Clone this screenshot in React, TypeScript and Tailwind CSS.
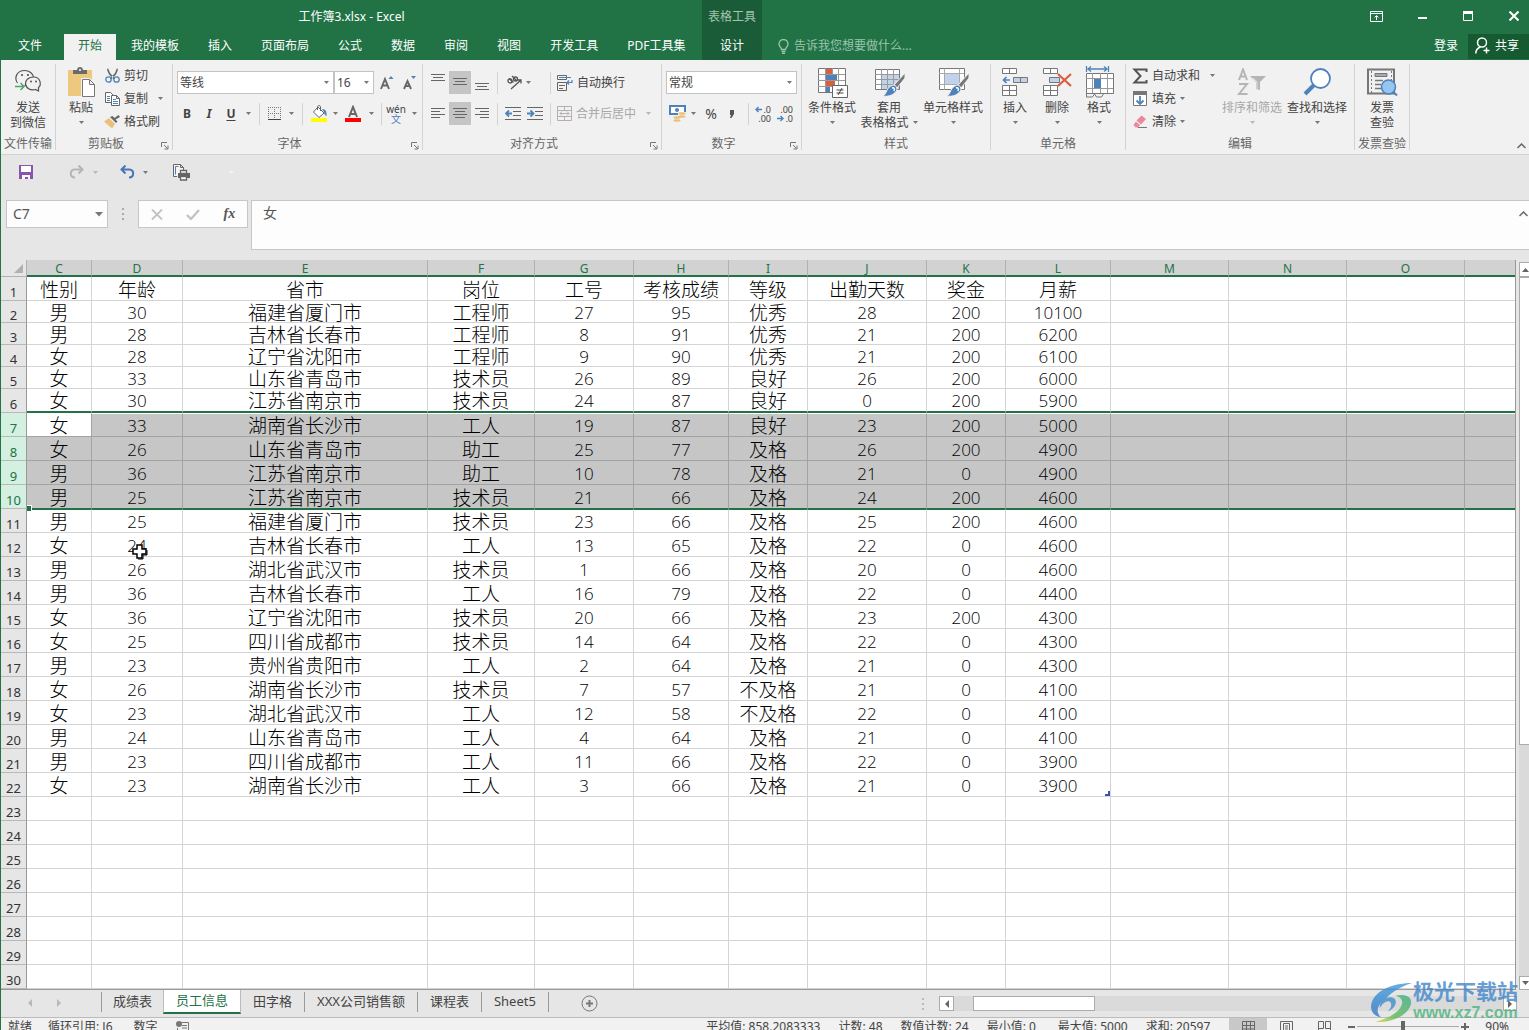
import type { ReactNode } from "react";

type RibbonItemProps = {
  icon: ReactNode;
  lines: string[];
  width: string;
  arrow?: "below" | "inline";
  disabled?: boolean;
};

const menuTabs = [
  "我的模板",
  "插入",
  "页面布局",
  "公式",
  "数据",
  "审阅",
  "视图",
  "开发工具",
  "PDF工具集",
];

const columns = [
  { name: "C", width: "w-[65px]" },
  { name: "D", width: "w-[91px]" },
  { name: "E", width: "w-[245px]" },
  { name: "F", width: "w-[107px]" },
  { name: "G", width: "w-[99px]" },
  { name: "H", width: "w-[95px]" },
  { name: "I", width: "w-[79px]" },
  { name: "J", width: "w-[119px]" },
  { name: "K", width: "w-[79px]" },
  { name: "L", width: "w-[105px]" },
  { name: "M", width: "w-[118px]" },
  { name: "N", width: "w-[118px]" },
  { name: "O", width: "w-[118px]" },
  { name: "", width: "" },
];

const data = [
  ["性别", "年龄", "省市", "岗位", "工号", "考核成绩", "等级", "出勤天数", "奖金", "月薪"],
  ["男", "30", "福建省厦门市", "工程师", "27", "95", "优秀", "28", "200", "10100"],
  ["男", "28", "吉林省长春市", "工程师", "8", "91", "优秀", "21", "200", "6200"],
  ["女", "28", "辽宁省沈阳市", "工程师", "9", "90", "优秀", "21", "200", "6100"],
  ["女", "33", "山东省青岛市", "技术员", "26", "89", "良好", "26", "200", "6000"],
  ["女", "30", "江苏省南京市", "技术员", "24", "87", "良好", "0", "200", "5900"],
  ["女", "33", "湖南省长沙市", "工人", "19", "87", "良好", "23", "200", "5000"],
  ["女", "26", "山东省青岛市", "助工", "25", "77", "及格", "26", "200", "4900"],
  ["男", "36", "江苏省南京市", "助工", "10", "78", "及格", "21", "0", "4900"],
  ["男", "25", "江苏省南京市", "技术员", "21", "66", "及格", "24", "200", "4600"],
  ["男", "25", "福建省厦门市", "技术员", "23", "66", "及格", "25", "200", "4600"],
  ["女", "24", "吉林省长春市", "工人", "13", "65", "及格", "22", "0", "4600"],
  ["男", "26", "湖北省武汉市", "技术员", "1", "66", "及格", "20", "0", "4600"],
  ["男", "36", "吉林省长春市", "工人", "16", "79", "及格", "22", "0", "4400"],
  ["女", "36", "辽宁省沈阳市", "技术员", "20", "66", "及格", "23", "200", "4300"],
  ["女", "25", "四川省成都市", "技术员", "14", "64", "及格", "22", "0", "4300"],
  ["男", "23", "贵州省贵阳市", "工人", "2", "64", "及格", "21", "0", "4300"],
  ["女", "26", "湖南省长沙市", "技术员", "7", "57", "不及格", "21", "0", "4100"],
  ["女", "23", "湖北省武汉市", "工人", "12", "58", "不及格", "22", "0", "4100"],
  ["男", "24", "山东省青岛市", "工人", "4", "64", "及格", "21", "0", "4100"],
  ["男", "23", "四川省成都市", "工人", "11", "66", "及格", "22", "0", "3900"],
  ["女", "23", "湖南省长沙市", "工人", "3", "66", "及格", "21", "0", "3900"],
];

const ROW_COUNT = 30;
const SELECTED_FROM = 7;
const SELECTED_TO = 10;

/* ---------- small shared pieces ---------- */

function Caret({ className = "", color = "text-[#777]" }: { className?: string; color?: string }) {
  return (
    <svg width="5" height="3" viewBox="0 0 5 3" className={`shrink-0 ${color} ${className}`}>
      <path d="M0 0h5L2.5 3z" fill="currentColor" />
    </svg>
  );
}

function CaretButton({ label, width }: { label: string; width: string }) {
  return (
    <button aria-label={label} className={`flex h-full items-center justify-center ${width}`}>
      <Caret />
    </button>
  );
}

function Divider({ className = "" }: { className?: string }) {
  return <span className={`h-[22px] w-px shrink-0 bg-[#d2d2d2] ${className}`} />;
}

function Group({
  label,
  width,
  launcher,
  children,
}: {
  label: string;
  width: string;
  launcher?: boolean;
  children: ReactNode;
}) {
  return (
    <section className={`flex shrink-0 flex-col border-r border-[#d2d2d2] ${width}`}>
      <div className="flex h-[71px]">{children}</div>
      <div className="flex h-4 items-start text-[#666]">
        <span className="flex-1 whitespace-nowrap text-center leading-5">{label}</span>
        {launcher && (
          <button aria-label={`${label}设置`} className="flex h-4 w-4 items-end justify-center">
            <svg width="9" height="9" viewBox="0 0 9 9" fill="none" stroke="#777">
              <path d="M1.5 6V1.5H7M4 4l3.5 3.5M8 4.5V8H4.5" />
            </svg>
          </button>
        )}
      </div>
    </section>
  );
}

function BigButton({ icon, lines, width, arrow, disabled }: RibbonItemProps) {
  return (
    <button
      disabled={disabled}
      className={`flex h-[68px] shrink-0 flex-col items-center pt-[2px] leading-[15px] ${width} ${
        disabled ? "text-[#a8a8a8]" : "text-[#444]"
      }`}
    >
      <span className="mb-[2px] flex h-8 items-center">{icon}</span>
      {lines.map((line, index) => (
        <span key={line} className="flex items-center gap-1 whitespace-nowrap">
          {line}
          {arrow === "inline" && index === lines.length - 1 && <Caret />}
        </span>
      ))}
      {arrow === "below" && (
        <span className="flex h-[15px] items-center">
          <Caret color={disabled ? "text-[#b8b8b8]" : "text-[#777]"} />
        </span>
      )}
    </button>
  );
}

function SmallButton({
  icon,
  label,
  gap = "gap-1",
  arrow,
}: {
  icon: ReactNode;
  label: string;
  gap?: string;
  arrow?: boolean;
}) {
  return (
    <button className="flex h-[23px] items-center gap-1 whitespace-nowrap">
      <span className="flex w-4 justify-center">{icon}</span>
      <span className={`flex items-center ${gap}`}>
        {label}
        {arrow && <Caret />}
      </span>
    </button>
  );
}

function Dropdown({ label, value, width }: { label: string; value: string; width: string }) {
  return (
    <span className={`relative flex h-[23px] border border-[#c3c3c3] bg-white ${width}`}>
      <select aria-label={label} className="w-full appearance-none bg-transparent pl-[2px] text-[#444] outline-none">
        <option>{value}</option>
      </select>
      <span className="pointer-events-none absolute right-1 top-[9px]">
        <Caret />
      </span>
    </span>
  );
}

function Lines({ d, label, active }: { d: string; label: string; active?: boolean }) {
  return (
    <button
      aria-label={label}
      className={`flex h-[23px] w-[22px] items-center justify-center ${active ? "bg-[#c5c5c5]" : ""}`}
    >
      <svg width="14" height="17" viewBox="0 0 14 17" stroke="#666" fill="none">
        <path d={d} />
      </svg>
    </button>
  );
}

/* ---------- ribbon icons ---------- */

function WechatIcon() {
  return (
    <svg width="28" height="26" viewBox="0 0 28 26" fill="none" stroke="#555" strokeWidth="1.2">
      <path d="M3.500 14C0 9 2.500 1.500 10.500 1.500c5 0 8.500 3 9 6.500M12.500 16.500l-2-.2" />
      <path d="M24.500 18.500c3-2.500 2.500-10.500-5-10.500-5 0-8 3-8 6.500 0 4.500 5 7.500 10 6l3 1.500z" />
      <path d="M1 17.500h9M6.500 14l3.500 3.500L6.500 21" stroke="#4fa56c" strokeWidth="1.500" />
      <g fill="#555" stroke="none">
        <circle cx="8" cy="6" r="1.100" />
        <circle cx="14" cy="6" r="1.100" />
        <circle cx="17" cy="12.500" r="1" />
        <circle cx="22" cy="12.500" r="1" />
      </g>
    </svg>
  );
}

function PasteIcon() {
  return (
    <svg width="29" height="30" viewBox="0 0 29 30">
      <path d="M1 3h24v26H1z" fill="#edc87e" />
      <path d="M6 7V3h4c0-4 6-4 6 0h4v4z" fill="#6b6b6b" />
      <circle cx="13" cy="3" r="1" fill="#fff" />
      <path d="M14 11h9l5.500 5.500V30H14z" fill="#f1f1f1" />
      <path d="M15.500 12.500h7l5 5v12h-12zM22.500 12.500v5h5" fill="#fff" stroke="#777" />
    </svg>
  );
}

function CutIcon() {
  return (
    <svg width="15" height="15" viewBox="0 0 15 15" fill="none">
      <path d="M3 0l2 5 5 5.500-1 1-5-5L2 2zM12 0l-2 5-5 5.500 1 1 5-5L13 2z" fill="#666" />
      <circle cx="3.500" cy="11.500" r="2.700" stroke="#4e82bb" strokeWidth="1.300" />
      <circle cx="11.500" cy="11.500" r="2.700" stroke="#4e82bb" strokeWidth="1.300" />
    </svg>
  );
}

function CopyIcon() {
  return (
    <svg width="15" height="14" viewBox="0 0 15 14" fill="#fff" stroke="#666">
      <path d="M.5.5h5l3 3v7h-8z" />
      <path d="M2 4.500h3M2 6.500h3M2 8.500h3" stroke="#4e82bb" />
      <path d="M6.500 3.500h5l3 3v7h-8zM11.500 3.500v3h3" />
      <path d="M8 7.500h3M8 9.500h5M8 11.500h5" stroke="#4e82bb" />
    </svg>
  );
}

function PainterIcon() {
  return (
    <svg width="16" height="14" viewBox="0 0 16 14">
      <path d="M5 3l6 6-3 4.500L0 6.500z" fill="#edc07a" />
      <path d="M6 2l6 6 1.500-1.500-2-2L16 2l-1.500-2-4 3-2-2z" fill="#666" />
    </svg>
  );
}

function GrowFontIcon({ shrink }: { shrink?: boolean }) {
  return (
    <svg width="14" height="16" viewBox="0 0 14 16">
      {shrink ? (
        <>
          <path d="M1 14L4.500 6 8 14M2.500 11h4" fill="none" stroke="#666" strokeWidth="1.900" />
          <path d="M8 1h5l-2.500 3z" fill="#4e82bb" />
        </>
      ) : (
        <>
          <path d="M1 14L5 4l4 10M2.500 10.500h5" fill="none" stroke="#666" strokeWidth="1.900" />
          <path d="M8.500 4h5L11 1z" fill="#4e82bb" />
        </>
      )}
    </svg>
  );
}

function BordersIcon() {
  return (
    <svg width="13" height="13" viewBox="0 0 13 13" fill="none" stroke="#777">
      <path d="M.5 0v12M6.500 0v12M12.500 0v12M0 .5h13M0 6.500h13" strokeDasharray="1 1" />
      <path d="M0 12.500h13" stroke="#444" />
    </svg>
  );
}

function FillIcon() {
  return (
    <svg width="17" height="17" viewBox="0 0 17 17">
      <path d="M7 2l6 6-5 4.500-5.500-5.500z" fill="#fff" stroke="#666" />
      <path d="M6.500 5V2c0-2 3-2 3 0v4" fill="none" stroke="#666" />
      <path d="M11 4c4 0 5 3 4.500 7C13 10 13.500 8 13 7z" fill="#4e82bb" />
      <path d="M0 13h16v4H0z" fill="#ff0" />
    </svg>
  );
}

function FontColorIcon() {
  return (
    <svg width="16" height="17" viewBox="0 0 16 17">
      <path d="M4 12L8 2l4 10M5 9h6" fill="none" stroke="#666" strokeWidth="2" />
      <path d="M0 13h16v4H0z" fill="#f00" />
    </svg>
  );
}

function OrientationIcon() {
  return (
    <svg width="18" height="17" viewBox="0 0 18 17" fill="none" stroke="#555" strokeWidth="1.300">
      <circle cx="4" cy="7" r="2" />
      <path d="M3 4.500l4.500 4M6 2l5 5" />
      <circle cx="9.500" cy="5" r="2" />
      <path d="M5 15L15 6M11.500 6H15v3.500" />
    </svg>
  );
}

function IndentIcon({ right }: { right?: boolean }) {
  return (
    <svg width="17" height="14" viewBox="0 0 17 14" fill="none">
      <path d="M0 .5h16M8 4.500h8M8 8.500h8M0 12.500h16" stroke="#666" />
      <path
        d={right ? "M0 6.500h6M3.500 3.500l3 3-3 3" : "M1 6.500h6M4 3.500l-3 3 3 3"}
        stroke="#4e82bb"
        strokeWidth="1.800"
      />
    </svg>
  );
}

function WrapIcon() {
  return (
    <svg width="16" height="16" viewBox="0 0 16 16" fill="none" stroke="#666">
      <path d="M.5.5h9v4h-9zM.5 7.500h9v8h-9zM2 10.500h6M2 13.500h4" />
      <path d="M2 2.500h12M15 5v2.500h-5M12 5.500l-2 2 2 2" stroke="#4e82bb" strokeWidth="1.200" />
    </svg>
  );
}

function MergeIcon() {
  return (
    <svg width="15" height="15" viewBox="0 0 15 15" fill="none" stroke="#b5aeb5">
      <path d="M.5.5h14v14H.5zM.5 4.500h14M.5 10.500h14M7.500.5v4M7.500 10.500v4M3 7.500h9M5 5.500l-2 2 2 2M10 5.500l2 2-2 2" />
    </svg>
  );
}

function CurrencyIcon() {
  return (
    <svg width="17" height="17" viewBox="0 0 17 17">
      <path d="M1 1h15v8H1z" fill="#fff" stroke="#4e82bb" strokeWidth="2" />
      <circle cx="8" cy="5" r="2" fill="#4e82bb" />
      <path d="M9 7h8v7h-4v3H4v-5h5z" fill="#f1f1f1" />
      <g fill="#edc07a">
        <ellipse cx="13" cy="8.500" rx="3.500" ry="1.300" />
        <ellipse cx="13" cy="11.500" rx="3.500" ry="1.300" />
        <ellipse cx="8" cy="12.500" rx="3.500" ry="1.300" />
        <ellipse cx="8" cy="15.500" rx="3.500" ry="1.300" />
      </g>
    </svg>
  );
}

function ConditionalIcon() {
  return (
    <svg width="31" height="31" viewBox="0 0 31 31">
      <path d="M1.500 1.500h27v24h-27z" fill="#fff" stroke="#777" />
      <path d="M8.500 1v24M15.500 1v24M21.500 1v24M1 7.500h27M1 13.500h27M1 19.500h27" stroke="#999" />
      <path d="M9 2h6v5H9zM9 14h9v5H9z" fill="#d9603f" />
      <path d="M9 8h11v5H9zM9 20h4v5H9z" fill="#4e82bb" />
      <path d="M15.500 18.500h15v12h-15z" fill="#fff" stroke="#666" />
      <path d="M19.500 23h7M19.500 26h7M25 21l-4 7" stroke="#444" />
    </svg>
  );
}

function BrushOverlay() {
  return (
    <>
      <path d="M31 5L20 17l3 3 8-10z" fill="#777" stroke="#f1f1f1" />
      <path d="M19 17c3 0 4 2 4 5-3 5-8 7-14 6 4-2 3-9 10-11z" fill="#4e82bb" stroke="#f1f1f1" />
      <path d="M18 20c2-1 3 1 2 3" fill="none" stroke="#fff" strokeWidth="1.500" />
    </>
  );
}

function TableFormatIcon() {
  return (
    <svg width="31" height="29" viewBox="0 0 31 29">
      <path d="M1.500 1.500h24v20h-24z" fill="#fff" stroke="#777" />
      <path d="M8 7h17v14H8z" fill="#c0d3ea" />
      <path d="M7.500 1v20M13.500 1v20M19.500 1v20M1 6.500h24M1 11.500h24M1 16.500h24" stroke="#999" />
      <BrushOverlay />
    </svg>
  );
}

function CellStyleIcon() {
  return (
    <svg width="31" height="29" viewBox="0 0 31 29">
      <path d="M1.500.5h25v21h-25z" fill="#fff" stroke="#777" />
      <path d="M6.500.5v21M21.500.5v21M1 5.500h25M1 16.500h25" stroke="#aaa" />
      <path d="M7 6h14v10H7z" fill="#c0d3ea" />
      <BrushOverlay />
    </svg>
  );
}

function InsertIcon() {
  return (
    <svg width="27" height="28" viewBox="0 0 27 28" fill="#fff" stroke="#777">
      <path d="M.5.500h14v5H.5zM7.500.500v5M.5 17.500h14v10H.5zM7.500 17.500v10M.5 22.500h14" />
      <path d="M11.500 9.500h14v5h-14z" fill="#c0d3ea" />
      <path d="M18.500 9.500v5" />
      <path d="M8 12H2M4.500 9L1.500 12l3 3" fill="none" stroke="#4e82bb" strokeWidth="1.700" />
    </svg>
  );
}

function DeleteIcon() {
  return (
    <svg width="29" height="28" viewBox="0 0 29 28" fill="#fff" stroke="#777">
      <path d="M.5.500h14v5H.5zM7.500.500v5M.5 17.500h14v10H.5zM7.500 17.500v10M.5 22.500h14" />
      <path d="M6.500 9.500h10v5h-10z" fill="#c0d3ea" />
      <path d="M15 6l13 12M28 6L15 18" stroke="#d9603f" strokeWidth="2.200" />
    </svg>
  );
}

function FormatIcon() {
  return (
    <svg width="29" height="32" viewBox="0 0 29 32" fill="none">
      <path d="M1.500 0v6M23.500 0v6M3 3h19M6 .5L3 3l3 2.500M19 .5L22 3l-3 2.500" stroke="#4e82bb" strokeWidth="1.300" />
      <path d="M1.500 7.500h27v20h-27z" fill="#fff" stroke="#777" />
      <path d="M7.500 7v20M15.500 7v20M22.500 7v20M1 12.500h27M1 22.500h27" stroke="#999" />
      <path d="M9 13h7v9H9z" fill="#4e82bb" />
      <path d="M1.500 27v4h6l2-3 2 3h5l2-3" stroke="#777" />
    </svg>
  );
}

function SumIcon() {
  return (
    <svg width="16" height="16" viewBox="0 0 16 16" fill="none" stroke="#555" strokeWidth="2">
      <path d="M14.500 4V1.500H2.500L8.500 8l-6 6.500h12V12" />
    </svg>
  );
}

function FillDownIcon() {
  return (
    <svg width="14" height="15" viewBox="0 0 14 15" fill="none">
      <path d="M.5.500h13v14H.5z" fill="#fff" stroke="#777" />
      <path d="M0 0h14v4H0z" fill="#777" />
      <path d="M7 5v8M3.500 9.500L7 13l3.500-3.500" stroke="#4e82bb" strokeWidth="1.800" />
    </svg>
  );
}

function EraserIcon() {
  return (
    <svg width="14" height="14" viewBox="0 0 14 14">
      <path d="M8.500.5L13 4 8 9.500 3.500 5.500z" fill="#e88a9c" />
      <path d="M3 6.500L7 10l-2 2.500H2.500L.5 10z" fill="#e88a9c" />
      <path d="M5 12.500h9" stroke="#777" />
    </svg>
  );
}

function SortFilterIcon() {
  return (
    <svg width="30" height="28" viewBox="0 0 30 28" fill="none" stroke="#b5b5b5" strokeWidth="2">
      <path d="M2 12L6 1.500 10 12M3 8.500h6M2 16h8L2 26h8.500" />
      <path d="M13 8h16l-6 6v8l-4-1v-7z" fill="#b5b5b5" stroke="none" />
      <path d="M16 10l4 4v7" stroke="#e8e8e8" strokeWidth="1" />
    </svg>
  );
}

function FindIcon() {
  return (
    <svg width="28" height="28" viewBox="0 0 28 28">
      <path d="M11 17L2 26" stroke="#4e82bb" strokeWidth="4" />
      <circle cx="17.500" cy="10.500" r="9.500" fill="#fff" stroke="#4e82bb" strokeWidth="1.800" />
    </svg>
  );
}

function InvoiceIcon() {
  return (
    <svg width="32" height="28" viewBox="0 0 32 28" fill="none" stroke="#777">
      <path d="M2 1.500h26v24H2z" strokeWidth="2" />
      <path d="M5.500 3v22M25.500 3v10" strokeDasharray="2 2" />
      <path d="M9 5.500h12v3H9z" fill="#aaa" />
      <path d="M9 12.500h8M9 16.500h6M9 20.500h6" strokeWidth="1.500" />
      <circle cx="22.500" cy="19" r="7" fill="#95c5f0" stroke="#4e82bb" strokeWidth="1.500" />
      <path d="M27.500 24l3.500 3.500" stroke="#4e82bb" strokeWidth="2" />
    </svg>
  );
}

/* ---------- page sections ---------- */

function TitleBar() {
  return (
    <header className="flex h-[60px] shrink-0 bg-[#217346] text-white">
      <div className="flex w-[701px] shrink-0 flex-col">
        <h1 className="flex h-[34px] items-center justify-center">工作簿3.xlsx - Excel</h1>
        <nav className="flex h-[26px] gap-px whitespace-nowrap">
          <button className="mr-1 w-[58px] pb-[3px]">文件</button>
          <button className="bg-[#f1f1f1] px-[14px] pb-[3px] text-[#217346]">开始</button>
          {menuTabs.map((tab) => (
            <button key={tab} className="px-[14px] pb-[3px]">
              {tab}
            </button>
          ))}
        </nav>
      </div>
      <div className="flex w-[60px] shrink-0 flex-col bg-[#1b5c38]">
        <span className="flex h-[34px] items-center justify-center text-[#a3c4b1]">表格工具</span>
        <button className="h-[26px] pb-[3px]">设计</button>
      </div>
      <div className="flex flex-1 flex-col">
        <div className="flex h-[32px] justify-end">
          <button aria-label="功能区显示选项" className="flex w-[46px] items-center justify-center">
            <svg width="13" height="11" viewBox="0 0 13 11" fill="none" stroke="#fff">
              <path d="M.5.500h12v10H.5zM0 2.500h13M6.500 9V5M4.500 6.500l2-2 2 2" />
            </svg>
          </button>
          <button aria-label="最小化" className="flex w-[46px] items-center justify-center pt-1">
            <svg width="9" height="2" viewBox="0 0 9 2">
              <path d="M0 0h9v2H0z" fill="#fff" />
            </svg>
          </button>
          <button aria-label="最大化" className="flex w-[46px] items-center justify-center">
            <svg width="10" height="10" viewBox="0 0 10 10">
              <path d="M.5.500h9v9h-9z" fill="none" stroke="#fff" />
              <path d="M0 0h10v3H0z" fill="#fff" />
            </svg>
          </button>
          <button aria-label="关闭" className="flex w-[38px] items-center justify-center pl-2">
            <svg width="10" height="10" viewBox="0 0 10 10" stroke="#fff" strokeWidth="2">
              <path d="M.5.500l9 9M9.500.500l-9 9" />
            </svg>
          </button>
        </div>
        <div className="flex h-[28px] items-center">
          <button className="flex flex-1 items-center gap-[5px] pl-4 text-[#9cc4ad]">
            <svg width="11" height="15" viewBox="0 0 11 15" fill="none" stroke="currentColor" strokeWidth="1.300">
              <path d="M3.500 10.500c0-2-2.500-3-2.500-5.500a4.500 4.500 0 0 1 9 0c0 2.500-2.500 3.500-2.500 5.500zM3.500 12.500h4M4 14.300h3" />
            </svg>
            告诉我您想要做什么...
          </button>
          <button className="px-[10px] pb-px">登录</button>
          <button className="mt-px flex h-[25px] w-[61px] items-center gap-[5px] bg-[#155a30] pb-[2px] pl-[7px]">
            <svg width="15" height="17" viewBox="0 0 15 17" fill="none" stroke="#fff" strokeWidth="1.500">
              <circle cx="7" cy="5.500" r="4.500" />
              <path d="M.8 16.500c0-3.500 2-5.500 4.500-6.500M11.500 10.500v6M8.500 13.500h6" />
            </svg>
            共享
          </button>
        </div>
      </div>
    </header>
  );
}

function Ribbon() {
  return (
    <div className="flex h-[95px] shrink-0 border-b border-[#d2d2d2] bg-[#f1f1f1] pb-1 pt-1 text-[#444]">
      <Group label="文件传输" width="w-[55px]">
        <BigButton icon={<WechatIcon />} lines={["发送", "到微信"]} width="w-[54px]" />
      </Group>

      <Group label="剪贴板" width="w-[117px]" launcher>
        <BigButton icon={<PasteIcon />} lines={["粘贴"]} width="ml-[2px] w-[46px]" arrow="below" />
        <div className="flex flex-col">
          <SmallButton icon={<CutIcon />} label="剪切" />
          <SmallButton icon={<CopyIcon />} label="复制" gap="gap-[10px]" arrow />
          <SmallButton icon={<PainterIcon />} label="格式刷" />
        </div>
      </Group>

      <Group label="字体" width="w-[250px]" launcher>
        <div className="flex flex-col gap-2 pl-1 pt-[7px]">
          <div className="flex h-[23px] items-center">
            <Dropdown label="字体" value="等线" width="w-[157px]" />
            <Dropdown label="字号" value="16" width="w-10" />
            <button aria-label="增大字号" className="flex w-[25px] justify-center">
              <GrowFontIcon />
            </button>
            <button aria-label="减小字号" className="flex w-[22px] justify-center">
              <GrowFontIcon shrink />
            </button>
          </div>
          <div className="flex h-[23px] items-center">
            <button className="w-5 font-bold">B</button>
            <button className="w-6 font-bold italic">I</button>
            <button className="w-5 font-bold underline underline-offset-2">U</button>
            <CaretButton label="下划线选项" width="w-[14px]" />
            <Divider className="mx-1" />
            <button aria-label="边框" className="flex w-5 justify-center">
              <BordersIcon />
            </button>
            <CaretButton label="边框选项" width="w-[14px]" />
            <Divider className="mx-1" />
            <button aria-label="填充颜色" className="flex w-6 justify-center">
              <FillIcon />
            </button>
            <CaretButton label="填充颜色选项" width="w-2" />
            <button aria-label="字体颜色" className="flex w-7 justify-center">
              <FontColorIcon />
            </button>
            <CaretButton label="字体颜色选项" width="w-2" />
            <Divider className="ml-[6px]" />
            <button className="flex w-7 flex-col items-center text-[10px] leading-[10px]">
              <span>wén</span>
              <span className="text-[#4e82bb]">文</span>
            </button>
            <CaretButton label="拼音选项" width="w-2" />
          </div>
        </div>
      </Group>

      <Group label="对齐方式" width="w-[239px]" launcher>
        <div className="flex flex-col gap-2 pl-1 pt-[7px]">
          <div className="flex h-[23px] items-center">
            <Lines label="顶端对齐" d="M0 .5h14M2 3.500h10M0 6.500h14" />
            <Lines label="垂直居中" d="M0 4.500h14M2 7.500h10M0 10.500h14" active />
            <Lines label="底端对齐" d="M0 9.500h14M2 12.500h10M0 15.500h14" />
            <Divider className="ml-1" />
            <button aria-label="方向" className="ml-2 flex w-[18px]">
              <OrientationIcon />
            </button>
            <CaretButton label="方向选项" width="w-2" />
            <Divider className="ml-[18px] mr-[6px]" />
            <SmallButton icon={<WrapIcon />} label="自动换行" />
          </div>
          <div className="flex h-[23px] items-center">
            <Lines label="左对齐" d="M0 3.500h14M0 6.500h9M0 9.500h14M0 12.500h9" />
            <Lines label="居中" d="M0 3.500h14M2 6.500h10M0 9.500h14M2 12.500h10" active />
            <Lines label="右对齐" d="M0 3.500h14M5 6.500h9M0 9.500h14M5 12.500h9" />
            <Divider className="ml-1" />
            <button aria-label="减少缩进量" className="ml-[7px] flex w-[22px]">
              <IndentIcon />
            </button>
            <button aria-label="增加缩进量" className="flex w-[17px]">
              <IndentIcon right />
            </button>
            <Divider className="mx-[6px]" />
            <button disabled className="flex items-center gap-1 whitespace-nowrap text-[#a8a8a8]">
              <MergeIcon />
              合并后居中
              <Caret className="ml-[6px]" color="text-[#b8b8b8]" />
            </button>
          </div>
        </div>
      </Group>

      <Group label="数字" width="w-[140px]" launcher>
        <div className="flex flex-col gap-2 pl-1 pt-[7px]">
          <Dropdown label="数字格式" value="常规" width="w-[131px]" />
          <div className="flex h-[23px] items-center">
            <button aria-label="会计数字格式" className="ml-[3px] flex w-[18px]">
              <CurrencyIcon />
            </button>
            <CaretButton label="会计数字格式选项" width="w-3" />
            <button className="w-6 text-sm">%</button>
            <button aria-label="千位分隔样式" className="flex w-[18px] justify-center">
              <svg width="6" height="8" viewBox="0 0 6 8">
                <path d="M1 0h4v4L2.500 8H1l1-3H1z" fill="#555" />
              </svg>
            </button>
            <Divider className="ml-[7px] mr-1" />
            <button aria-label="增加小数位数" className="flex w-[22px] flex-col items-end pr-1 text-[9px] leading-[9px]">
              <span className="flex items-center gap-px">
                <svg width="7" height="7" viewBox="0 0 7 7" fill="none" stroke="#4e82bb" strokeWidth="1.400">
                  <path d="M7 3.500H1M3.500 1L1 3.500 3.500 6" />
                </svg>
                .0
              </span>
              <span>.00</span>
            </button>
            <button aria-label="减少小数位数" className="flex w-[22px] flex-col items-end pr-1 text-[9px] leading-[9px]">
              <span>.00</span>
              <span className="flex items-center gap-px">
                <svg width="7" height="7" viewBox="0 0 7 7" fill="none" stroke="#4e82bb" strokeWidth="1.400">
                  <path d="M0 3.500h6M3.500 1L6 3.500 3.500 6" />
                </svg>
                .0
              </span>
            </button>
          </div>
        </div>
      </Group>

      <Group label="样式" width="w-[189px]">
        <BigButton icon={<ConditionalIcon />} lines={["条件格式"]} width="ml-[3px] w-[54px]" arrow="below" />
        <BigButton icon={<TableFormatIcon />} lines={["套用", "表格格式"]} width="w-[60px]" arrow="inline" />
        <BigButton icon={<CellStyleIcon />} lines={["单元格样式"]} width="w-[68px]" arrow="below" />
      </Group>

      <Group label="单元格" width="w-[135px]">
        <BigButton icon={<InsertIcon />} lines={["插入"]} width="ml-[3px] w-[42px]" arrow="below" />
        <BigButton icon={<DeleteIcon />} lines={["删除"]} width="w-[42px]" arrow="below" />
        <BigButton icon={<FormatIcon />} lines={["格式"]} width="w-[42px]" arrow="below" />
      </Group>

      <Group label="编辑" width="w-[229px]">
        <div className="flex w-[93px] flex-col items-start pl-[6px]">
          <SmallButton icon={<SumIcon />} label="自动求和" gap="gap-[10px]" arrow />
          <SmallButton icon={<FillDownIcon />} label="填充" arrow />
          <SmallButton icon={<EraserIcon />} label="清除" arrow />
        </div>
        <BigButton icon={<SortFilterIcon />} lines={["排序和筛选"]} width="w-[66px]" arrow="below" disabled />
        <BigButton icon={<FindIcon />} lines={["查找和选择"]} width="w-16" arrow="below" />
      </Group>

      <Group label="发票查验" width="w-[55px]">
        <BigButton icon={<InvoiceIcon />} lines={["发票", "查验"]} width="w-[54px]" />
      </Group>

      <div className="flex flex-1 items-end justify-end pr-[2px]">
        <button aria-label="折叠功能区" className="p-px">
          <svg width="9" height="6" viewBox="0 0 9 6" fill="none" stroke="#666" strokeWidth="1.500">
            <path d="M.5 5l4-4 4 4" />
          </svg>
        </button>
      </div>
    </div>
  );
}

function QuickAccess() {
  return (
    <div className="flex h-[35px] shrink-0 items-center pb-px pl-[18px]">
      <button aria-label="保存" className="mr-9">
        <svg width="14" height="14" viewBox="0 0 14 14">
          <path d="M0 0h14v14H0z" fill="#8a55ad" />
          <path d="M2 1h10v6H2zM3 10h8v4H9v-2H6v2H3z" fill="#fff" />
        </svg>
      </button>
      <button aria-label="恢复" className="mr-[9px]">
        <svg width="15" height="14" viewBox="0 0 15 14" fill="none" stroke="#b5b5b5" strokeWidth="2">
          <path d="M9.500.5L13.500 4.500l-4 4M13 4.500H5.500c-5 0-5 8 .5 8" />
        </svg>
      </button>
      <Caret className="mr-[22px]" color="text-[#b8b8b8]" />
      <button aria-label="撤消" className="mr-2">
        <svg width="15" height="14" viewBox="0 0 15 14" fill="none" stroke="#4478b4" strokeWidth="2">
          <path d="M5.500.5L1.500 4.500l4 4M2 4.500h7.500c5 0 5 8-.5 8" />
        </svg>
      </button>
      <Caret className="mr-[25px]" />
      <button aria-label="打印预览" className="mr-[39px]">
        <svg width="17" height="17" viewBox="0 0 17 17" fill="none" stroke="#666">
          <path d="M4 12.500H.5V.5h7l3 3v3M7.500.5v3h3" fill="#f4f4f4" />
          <path d="M2.500 10.500v-8h3" stroke="#4e82bb" />
          <path d="M5 9h12v5H5z" fill="#666" stroke="none" />
          <path d="M7.500 6.500h6v3h-6zM7.500 12.500h6v3.500h-6z" fill="#fff" strokeWidth="1.300" />
        </svg>
      </button>
      <Caret color="text-[#f4f4f4]" />
    </div>
  );
}

function FormulaBar() {
  return (
    <div className="mb-[10px] mt-[10px] flex h-[50px] shrink-0 items-start pl-[5px] text-[#555]">
      <div className="flex h-7 w-[102px] items-center border border-[#c6c6c6] bg-[#fdfdfd] pr-1">
        <input aria-label="名称框" defaultValue="C7" className="w-full min-w-0 pl-[6px] text-sm outline-none" />
        <svg width="8" height="5" viewBox="0 0 8 5" className="shrink-0">
          <path d="M0 0h8L4 4.500z" fill="#777" />
        </svg>
      </div>
      <svg width="2" height="12" viewBox="0 0 2 12" className="mx-[14px] mt-2">
        <path d="M0 0h2v2H0zM0 5h2v2H0zM0 10h2v2H0z" fill="#aaa" />
      </svg>
      <div className="mr-[3px] flex h-7 w-[110px] items-center justify-around border border-[#c6c6c6] bg-[#fdfdfd]">
        <button aria-label="取消">
          <svg width="12" height="11" viewBox="0 0 12 11" stroke="#c2c2c2" strokeWidth="1.800">
            <path d="M1 .5l10 10M11 .5l-10 10" />
          </svg>
        </button>
        <button aria-label="输入">
          <svg width="14" height="11" viewBox="0 0 14 11" fill="none" stroke="#c2c2c2" strokeWidth="2.300">
            <path d="M1 6l4 4 8-9" />
          </svg>
        </button>
        <button aria-label="插入函数" className="font-['Liberation_Serif',serif] text-sm font-bold italic">
          fx
        </button>
      </div>
      <div className="flex h-[50px] flex-1 border border-r-0 border-[#c6c6c6] bg-[#fdfdfd]">
        <textarea
          aria-label="编辑栏"
          defaultValue="女"
          className="h-full flex-1 resize-none overflow-hidden pl-[11px] pt-[2px] text-sm leading-5 outline-none"
        />
        <button aria-label="折叠编辑栏" className="mt-[9px] h-2 pr-px">
          <svg width="9" height="6" viewBox="0 0 9 6" fill="none" stroke="#666" strokeWidth="1.500">
            <path d="M.5 5l4-4 4 4" />
          </svg>
        </button>
      </div>
    </div>
  );
}

function rowHeight(row: number) {
  return row > 1 && row < SELECTED_FROM - 1 ? "h-[22px]" : "h-6";
}

function cellBorder(row: number) {
  if (row === SELECTED_FROM - 1) return "border-b-2 border-b-[#217346]";
  if (row === SELECTED_FROM) return "border-t border-t-white border-b border-b-[#a3a3a3]";
  if (row === SELECTED_TO) return "border-b border-b-[#217346]";
  if (row === SELECTED_TO + 1) return "border-t border-t-[#217346] border-b border-b-[#d4d4d4]";
  if (row > SELECTED_FROM && row < SELECTED_TO) return "border-b border-b-[#a3a3a3]";
  return "border-b border-b-[#d4d4d4]";
}

function CellExtras({ id }: { id: string }) {
  if (id === "C10") {
    return <span className="absolute -bottom-[3px] left-0 z-10 h-[6px] w-[5px] border-r border-t border-white bg-[#217346]" />;
  }
  if (id === "D12") {
    return (
      <svg width="17" height="17" viewBox="0 0 17 17" className="absolute left-[39px] top-[10px] z-10">
        <path d="M6 2h5v4h4v5h-4v4H6v-4H2V6h4z" fill="#fff" stroke="#000" strokeWidth="1.500" />
        <path d="M7 16h5v-4h4V7" fill="none" stroke="#000" />
      </svg>
    );
  }
  if (id === "L22") {
    return (
      <svg width="5" height="5" viewBox="0 0 5 5" className="absolute bottom-0 right-0">
        <path d="M3 0h2v5H0V3h3z" fill="#3f51b5" />
      </svg>
    );
  }
  return null;
}

function Sheet() {
  const rows = Array.from({ length: ROW_COUNT }, (_, index) => index + 1);
  return (
    <div className="flex shrink-0">
      <div className="min-w-0 flex-1 overflow-hidden border-b border-r border-[#999]">
        <table className="w-full table-fixed border-separate border-spacing-0">
          <colgroup>
            <col className="w-[26px]" />
            {columns.map((column) => (
              <col key={column.name} className={column.width} />
            ))}
          </colgroup>
          <thead className="text-[12px] leading-[12px] text-[#217346]">
            <tr>
              <th className="h-[17px] border-b border-r border-[#b1b1b1] bg-[#e6e6e6] p-0">
                <svg width="9" height="9" viewBox="0 0 9 9" className="ml-[13px]">
                  <path d="M9 0v9H0z" fill="#b1b1b1" />
                </svg>
              </th>
              {columns.map((column) => (
                <th
                  key={column.name}
                  className="h-[17px] border-b-2 border-r border-b-[#217346] border-r-[#b1b1b1] bg-[#d2d2d2] p-0 pt-[3px] font-normal last:border-r-0"
                >
                  {column.name}
                </th>
              ))}
            </tr>
          </thead>
          <tbody>
            {rows.map((row) => {
              const selected = row >= SELECTED_FROM && row <= SELECTED_TO;
              return (
                <tr key={row}>
                  <th
                    className={`border-b border-r border-b-[#b8b8b8] border-r-[#999] p-0 pt-[7px] text-[13px] font-normal leading-[14px] ${rowHeight(row)} ${
                      selected ? "bg-[#d3f0e0] text-[#217346]" : "bg-[#e6e6e6] text-[#333]"
                    }`}
                  >
                    {row}
                  </th>
                  {columns.map((column, index) => {
                    const id = `${column.name}${row}`;
                    const value = data[row - 1]?.[index] ?? "";
                    const grey = selected && id !== "C7";
                    const size = /^\d+$/.test(value) ? "text-[17px]" : "text-[19px]";
                    return (
                      <td
                        key={column.name}
                        className={`relative whitespace-nowrap border-r p-0 pt-[2px] text-center font-['Open_Sans','Noto_Sans_CJK_SC',sans-serif] font-light leading-[18px] text-black last:border-r-0 ${size} ${cellBorder(row)} ${
                          selected ? "border-r-[#a3a3a3]" : "border-r-[#d4d4d4]"
                        } ${grey ? "bg-[#c6c6c6]" : "bg-white"}`}
                      >
                        {value}
                        <CellExtras id={id} />
                      </td>
                    );
                  })}
                </tr>
              );
            })}
          </tbody>
        </table>
      </div>
      <div className="flex w-[13px] shrink-0 flex-col overflow-hidden pl-[3px] pt-[2px]">
        <button aria-label="向上滚动" className="flex h-[15px] items-center border border-r-0 border-[#ababab] bg-white pl-[2px]">
          <svg width="7" height="4" viewBox="0 0 7 4">
            <path d="M0 4h7L3.500 0z" fill="#666" />
          </svg>
        </button>
        <div className="flex-1 bg-[#dadada]">
          <div className="h-[67%] border border-r-0 border-[#ababab] bg-white" />
        </div>
        <button aria-label="向下滚动" className="flex h-[14px] items-center border border-r-0 border-[#ababab] bg-white pl-[2px]">
          <svg width="7" height="4" viewBox="0 0 7 4">
            <path d="M0 0h7L3.500 4z" fill="#666" />
          </svg>
        </button>
      </div>
    </div>
  );
}

function Arrow({ left }: { left?: boolean }) {
  return (
    <svg width="4" height="8" viewBox="0 0 4 8">
      <path d={left ? "M4 0v8L0 4z" : "M0 0v8l4-4z"} fill="currentColor" />
    </svg>
  );
}

function SheetTabs() {
  const tab = "mt-[2px] flex h-5 items-center border-r border-[#999] px-3";
  return (
    <div className="flex h-[28px] shrink-0 items-start border-b border-[#bbb] text-[#444]">
      <div className="flex h-[26px] w-[100px] items-center pl-[27px] text-[#b8b8b8]">
        <button aria-label="上一个工作表" className="mr-[25px]">
          <Arrow left />
        </button>
        <button aria-label="下一个工作表">
          <Arrow />
        </button>
      </div>
      <nav className="flex items-start whitespace-nowrap text-[13px]">
        <button className="mt-[2px] flex h-5 items-center border-l border-[#999] px-[11px]">成绩表</button>
        <button className="flex h-6 items-center border-x border-b-2 border-x-[#bbb] border-b-[#217346] bg-white px-3 text-[#217346]">
          员工信息
        </button>
        <button className={tab}>田字格</button>
        <button className={tab}>XXX公司销售额</button>
        <button className={tab}>课程表</button>
        <button className={tab}>Sheet5</button>
        <button aria-label="新工作表" className="ml-8 mt-[5px]">
          <svg width="17" height="17" viewBox="0 0 17 17" fill="none" stroke="#777">
            <circle cx="8.500" cy="8.500" r="7.500" />
            <path d="M8.500 5v7M5 8.500h7" strokeWidth="2" />
          </svg>
        </button>
      </nav>
      <div className="ml-auto mr-3 mt-[6px] flex items-center text-[#666]">
        <svg width="2" height="12" viewBox="0 0 2 12" className="mr-[15px]">
          <path d="M0 0h2v2H0zM0 5h2v2H0zM0 10h2v2H0z" fill="#bbb" />
        </svg>
        <button aria-label="向左滚动" className="flex h-[15px] w-[15px] items-center justify-center border border-[#ababab] bg-white">
          <Arrow left />
        </button>
        <div className="h-[15px] w-[549px] bg-[#dadada] pl-[19px]">
          <div className="h-full w-[122px] border border-[#ababab] bg-white" />
        </div>
        <button aria-label="向右滚动" className="flex h-[15px] w-[14px] items-center justify-center border border-[#ababab] bg-white">
          <Arrow />
        </button>
      </div>
    </div>
  );
}

function StatusBar() {
  return (
    <footer className="flex h-[17px] shrink-0 items-center whitespace-nowrap bg-[#f1f1f1] pl-[7px] leading-4 text-[#444]">
      <span className="mr-4">就绪</span>
      <span className="mr-[21px]">循环引用: J6</span>
      <span className="mr-[18px]">数字</span>
      <button aria-label="录制宏">
        <svg width="13" height="12" viewBox="0 0 13 12" fill="none" stroke="#777">
          <path d="M4.500 1.500h8v10h-11V7M6 4.500h5M6 7h5M4 9.500h7" />
          <circle cx="3" cy="3" r="3" fill="#777" stroke="none" />
        </svg>
      </button>
      <div className="ml-auto flex gap-[18px]">
        <span>平均值: 858.2083333</span>
        <span>计数: 48</span>
        <span>数值计数: 24</span>
        <span>最小值: 0</span>
        <span className="ml-1">最大值: 5000</span>
        <span>求和: 20597</span>
      </div>
      <div className="ml-[19px] flex">
        <button aria-label="普通" className="flex h-[17px] w-[38px] items-center justify-center bg-[#c8c8c8]">
          <svg width="13" height="12" viewBox="0 0 13 12" fill="none" stroke="#666">
            <path d="M.5.500h12v11H.5zM4.500.500v11M8.500.500v11M0 4.500h13M0 8h13" />
          </svg>
        </button>
        <button aria-label="页面布局视图" className="flex w-[38px] items-center justify-center">
          <svg width="13" height="12" viewBox="0 0 13 12" fill="none" stroke="#666">
            <path d="M.5.500h12v11H.5zM3.500 2.500h6v9M3.500 2.500v9M5 5h3M5 7h3M5 9h3" />
          </svg>
        </button>
        <button aria-label="分页预览" className="flex w-[38px] items-center justify-center">
          <svg width="13" height="12" viewBox="0 0 13 12" fill="none" stroke="#666">
            <path d="M.5 11.500V.500h5v7h-5M7.500 7.500V.500h5v11M7.500 7.500h5" />
          </svg>
        </button>
      </div>
      <button aria-label="缩小" className="ml-[2px] flex h-4 w-3 items-center justify-center">
        <svg width="7" height="2" viewBox="0 0 7 2">
          <path d="M0 0h7v2H0z" fill="#666" />
        </svg>
      </button>
      <input
        type="range"
        aria-label="显示比例"
        min="10"
        max="200"
        defaultValue="95"
        className="h-3 w-[102px] appearance-none bg-[linear-gradient(#aaa,#aaa)] bg-[length:100%_1px] bg-center bg-no-repeat [&::-webkit-slider-thumb]:h-3 [&::-webkit-slider-thumb]:w-1 [&::-webkit-slider-thumb]:appearance-none [&::-webkit-slider-thumb]:bg-[#666]"
      />
      <button aria-label="放大" className="flex h-4 w-3 items-center justify-center">
        <svg width="8" height="8" viewBox="0 0 8 8" stroke="#666" strokeWidth="2">
          <path d="M4 0v8M0 4h8" />
        </svg>
      </button>
      <button className="ml-[14px] mr-5">90%</button>
    </footer>
  );
}

function Watermark() {
  return (
    <div className="pointer-events-none absolute bottom-[6px] right-[11px] flex items-center opacity-80">
      <svg width="43" height="41" viewBox="0 0 44 42">
        <defs>
          <linearGradient id="swoosh" x1="0" y1="0" x2="0" y2="1">
            <stop offset="0" stopColor="#3d9bdc" />
            <stop offset="1" stopColor="#3479c4" />
          </linearGradient>
          <linearGradient id="leaf" x1="1" y1="0" x2="0" y2="1">
            <stop offset="0" stopColor="#3fb08a" />
            <stop offset="0.6" stopColor="#5cb85c" />
            <stop offset="1" stopColor="#d8d840" />
          </linearGradient>
        </defs>
        <path d="M43 1C22 1 2 10 1 25c0 6 4 10 10 11-5-5-4-11 2-16C20 12 30 5 43 1z" fill="url(#swoosh)" />
        <path d="M10 27c-1-9 9-14 15-10 4 4-1 12-7 13 4-3 5-8 2-10-4-1-8 3-10 7z" fill="#3f8fce" />
        <path d="M26 14c10-2 17 1 16 8-2 11-18 20-37 19C20 37 32 30 33 21c0-4-3-6-7-7z" fill="url(#leaf)" />
      </svg>
      <div className="flex flex-col items-center font-bold">
        <span className="text-[21px] leading-[22px] text-[#4188cc]">极光下载站</span>
        <span className="font-['Liberation_Sans',sans-serif] text-base leading-[22px] text-[#4eb37c]">www.xz7.com</span>
      </div>
    </div>
  );
}

export default function App() {
  return (
    <div className="relative flex h-screen flex-col overflow-hidden border-l border-[#217346] bg-[#e6e6e6] font-['Noto_Sans','Noto_Sans_CJK_SC',sans-serif] text-xs">
      <TitleBar />
      <Ribbon />
      <QuickAccess />
      <FormulaBar />
      <Sheet />
      <SheetTabs />
      <StatusBar />
      <Watermark />
    </div>
  );
}
